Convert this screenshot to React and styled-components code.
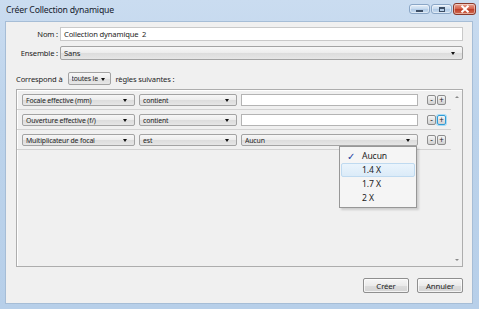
import React from 'react';
import styled, { createGlobalStyle } from 'styled-components';

const GlobalStyle = createGlobalStyle`
  html, body {
    margin: 0;
    padding: 0;
    background: #bcd3eb;
  }

  body {
    width: 479px;
    height: 309px;
    overflow: hidden;
    font-family: "Noto Sans", "DejaVu Sans", sans-serif;
    color: #1e1e1e;
  }

  * {
    box-sizing: border-box;
  }
`;

const Window = styled.div`
  display: flex;
  flex-direction: column;
  width: 479px;
  height: 309px;
  background: linear-gradient(180deg, #cadcf0 0%, #bcd3eb 40%, #b7cfe9 100%);
`;

const TitleBar = styled.div`
  display: flex;
  justify-content: space-between;
  align-items: flex-start;
  height: 21px;
  padding: 0 3px 0 6px;
`;

const Title = styled.span`
  margin-top: 4px;
  font-size: 8.7px;
  line-height: 13px;
  letter-spacing: -0.2px;
  color: #15202c;
`;

const Controls = styled.div`
  display: flex;
  gap: 1px;
  margin-top: 3px;
`;

const CtrlButton = styled.div`
  display: flex;
  justify-content: center;
  align-items: center;
  width: ${(p) => (p.$close ? '23px' : '21px')};
  height: ${(p) => (p.$close ? '12px' : '10px')};
  margin-top: ${(p) => (p.$close ? '0' : '1px')};
  border: 1px solid ${(p) => (p.$close ? '#8a3a2c' : '#8aa6c6')};
  border-radius: 3px;
  background: ${(p) =>
    p.$close
      ? 'linear-gradient(180deg, #e8a493 0%, #d5654f 45%, #c0402a 55%, #cf6b50 100%)'
      : 'linear-gradient(180deg, #e4eef9 0%, #c8dbef 45%, #b3cce7 55%, #c7dbef 100%)'};
  box-shadow: inset 0 0 0 1px rgba(255, 255, 255, 0.45);
`;

const MinGlyph = styled.span`
  display: block;
  width: 7px;
  height: 2px;
  margin-top: 3px;
  background: #3d4f66;
`;

const MaxGlyph = styled.span`
  display: block;
  width: 6px;
  height: 5px;
  border: 1px solid #3d4f66;
  border-top-width: 2px;
`;

const Client = styled.div`
  display: flex;
  flex: 1;
  flex-direction: column;
  margin: 0 6px 5px 5px;
  padding: 5px 9px 10px 10px;
  border: 1px solid #a6bdd6;
  background: #f0f0f0;
  font-size: 7.6px;
  letter-spacing: -0.15px;
`;

const FieldGrid = styled.div`
  display: grid;
  grid-template-columns: 42px 1fr;
  column-gap: 2px;
  row-gap: 5px;
  align-items: center;
`;

const FieldLabel = styled.label`
  display: flex;
  justify-content: flex-end;
  white-space: nowrap;
  color: #222;
`;

const TextBox = styled.div`
  display: flex;
  align-items: center;
  height: ${(p) => p.$h || 14}px;
  padding-left: 3px;
  border: 1px solid ${(p) => p.$border || '#c9c9c9'};
  background: #fff;
  font-size: ${(p) => p.$size || 7.6}px;
  white-space: nowrap;
  overflow: hidden;
`;

const SelectBox = styled.div`
  position: relative;
  display: flex;
  align-items: center;
  width: ${(p) => (p.$w ? `${p.$w}px` : 'auto')};
  height: ${(p) => p.$h || 14}px;
  padding: 0 12px 0 3px;
  border: 1px solid #a3a3a3;
  border-radius: 2px;
  background: linear-gradient(180deg, #f7f7f7 0%, #ececec 50%, #dcdcdc 51%, #e6e6e6 100%);
  font-size: ${(p) => p.$size || 7.6}px;
  white-space: nowrap;
`;

const SelectText = styled.span`
  flex: 1;
  overflow: hidden;
`;

const Arrow = styled.span`
  position: absolute;
  top: 50%;
  right: ${(p) => p.$right || 7}px;
  width: 0;
  height: 0;
  margin-top: -1px;
  border-left: 2.5px solid transparent;
  border-right: 2.5px solid transparent;
  border-top: 3px solid #111;
`;

const MatchRow = styled.div`
  display: flex;
  align-items: center;
  gap: 5px;
  margin-top: 12px;
`;

const RulesPanel = styled.div`
  display: flex;
  flex: 1;
  margin-top: 4px;
  border: 1px solid #adadad;
  box-shadow: inset 1px 1px 0 #fff;
`;

const RulesList = styled.div`
  display: flex;
  flex: 1;
  flex-direction: column;
`;

const RuleRow = styled.div`
  display: flex;
  align-items: center;
  height: 20px;
  padding: 4px 0 3px 5px;
  border-bottom: 1px solid #d2d2d2;
`;

const RuleField = styled.div`
  position: relative;
  width: ${(p) => p.$w}px;
  margin-right: ${(p) => p.$gap ?? 4}px;
`;

const StepGroup = styled.div`
  display: flex;
  gap: 1px;
  margin-left: 9px;
`;

const StepButton = styled.div`
  display: flex;
  justify-content: center;
  align-items: center;
  width: 9px;
  height: 10px;
  border: 1px solid ${(p) => (p.$focus ? '#2f9bd6' : '#8e8e8e')};
  border-radius: 2px;
  background: linear-gradient(180deg, #f5f5f5 0%, #e2e2e2 50%, #d2d2d2 100%);
  box-shadow: ${(p) => (p.$focus ? '0 0 0 1px #a9dcf6' : 'none')};
  font-size: 8px;
  line-height: 1;
  color: #222;
`;

const ScrollStrip = styled.div`
  display: flex;
  flex-direction: column;
  justify-content: space-between;
  align-items: center;
  width: 11px;
  padding: 6px 0 5px;
`;

const ScrollArrow = styled.span`
  width: 0;
  height: 0;
  border-left: 2px solid transparent;
  border-right: 2px solid transparent;
  border-bottom: ${(p) => (p.$up ? '2px solid #8a8a8a' : 'none')};
  border-top: ${(p) => (p.$up ? 'none' : '2px solid #8a8a8a')};
`;

const Menu = styled.div`
  position: absolute;
  top: 100%;
  left: 98px;
  z-index: 2;
  width: 78px;
  padding: 2px 1px;
  border: 1px solid #979797;
  background: #f5f5f5;
  box-shadow: 2px 2px 2px rgba(0, 0, 0, 0.15);
`;

const MenuItem = styled.div`
  display: flex;
  align-items: center;
  height: 14px;
  padding-left: 5px;
  border: 1px solid ${(p) => (p.$active ? '#bfdaf0' : 'transparent')};
  border-radius: 2px;
  background: ${(p) => (p.$active ? 'linear-gradient(180deg, #eaf4fc, #dbebf8)' : 'transparent')};
  font-size: 8.6px;
  letter-spacing: -0.1px;
  color: #222;
`;

const Check = styled.span`
  width: 15px;
  color: #2340a0;
  font-size: 10px;
  font-weight: bold;
`;

const Footer = styled.div`
  display: flex;
  justify-content: flex-end;
  gap: 8px;
  margin-top: 11px;
`;

const DialogButton = styled.div`
  display: flex;
  justify-content: center;
  align-items: center;
  width: 46px;
  height: 15px;
  border: 1px solid #8f8f8f;
  border-radius: 2px;
  background: linear-gradient(180deg, #f6f6f6 0%, #ebebeb 50%, #dddddd 51%, #d4d4d4 100%);
  box-shadow: inset 0 0 0 1px rgba(255, 255, 255, 0.7);
  font-size: 7.8px;
  color: #222;
`;

const rules = [
  { field: 'Focale effective (mm)', op: 'contient' },
  { field: 'Ouverture effective (f/)', op: 'contient', focus: true },
  { field: 'Multiplicateur de focal', op: 'est', value: 'Aucun', open: true },
];

const options = ['Aucun', '1.4 X', '1.7 X', '2 X'];

const App = () => (
  <Window>
    <GlobalStyle />
    <TitleBar>
      <Title>Créer Collection dynamique</Title>
      <Controls>
        <CtrlButton>
          <MinGlyph />
        </CtrlButton>
        <CtrlButton>
          <MaxGlyph />
        </CtrlButton>
        <CtrlButton $close>
          <svg width="10" height="8" viewBox="0 0 10 8">
            <path d="M1.5 0.8 L8.5 7.2 M8.5 0.8 L1.5 7.2" stroke="#fff" strokeWidth="2" />
          </svg>
        </CtrlButton>
      </Controls>
    </TitleBar>
    <Client>
      <FieldGrid>
        <FieldLabel>Nom :</FieldLabel>
        <TextBox>Collection dynamique&nbsp;&nbsp;2</TextBox>
        <FieldLabel>Ensemble :</FieldLabel>
        <SelectBox>
          <SelectText>Sans</SelectText>
          <Arrow />
        </SelectBox>
      </FieldGrid>
      <MatchRow>
        <span>Correspond à</span>
        <SelectBox $w={43} $h={13} $size={6.8}>
          <SelectText>toutes les</SelectText>
          <Arrow $right={5} />
        </SelectBox>
        <span>règles suivantes :</span>
      </MatchRow>
      <RulesPanel>
        <RulesList>
          {rules.map((r) => (
            <RuleRow key={r.field}>
              <RuleField $w={113}>
                <SelectBox $h={12} $size={6.9}>
                  <SelectText>{r.field}</SelectText>
                  <Arrow />
                </SelectBox>
              </RuleField>
              <RuleField $w={98}>
                <SelectBox $h={12} $size={6.9}>
                  <SelectText>{r.op}</SelectText>
                  <Arrow />
                </SelectBox>
              </RuleField>
              <RuleField $w={177} $gap={0}>
                {r.value ? (
                  <SelectBox $h={12} $size={6.9}>
                    <SelectText>{r.value}</SelectText>
                    <Arrow />
                  </SelectBox>
                ) : (
                  <TextBox $h={12} $border="#b4b4b4" />
                )}
                {r.open && (
                  <Menu>
                    {options.map((o, i) => (
                      <MenuItem key={o} $active={i === 1}>
                        <Check>{i === 0 ? '✓' : ''}</Check>
                        {o}
                      </MenuItem>
                    ))}
                  </Menu>
                )}
              </RuleField>
              <StepGroup>
                <StepButton>-</StepButton>
                <StepButton $focus={r.focus}>+</StepButton>
              </StepGroup>
            </RuleRow>
          ))}
        </RulesList>
        <ScrollStrip>
          <ScrollArrow $up />
          <ScrollArrow />
        </ScrollStrip>
      </RulesPanel>
      <Footer>
        <DialogButton>Créer</DialogButton>
        <DialogButton>Annuler</DialogButton>
      </Footer>
    </Client>
  </Window>
);

export default App;
